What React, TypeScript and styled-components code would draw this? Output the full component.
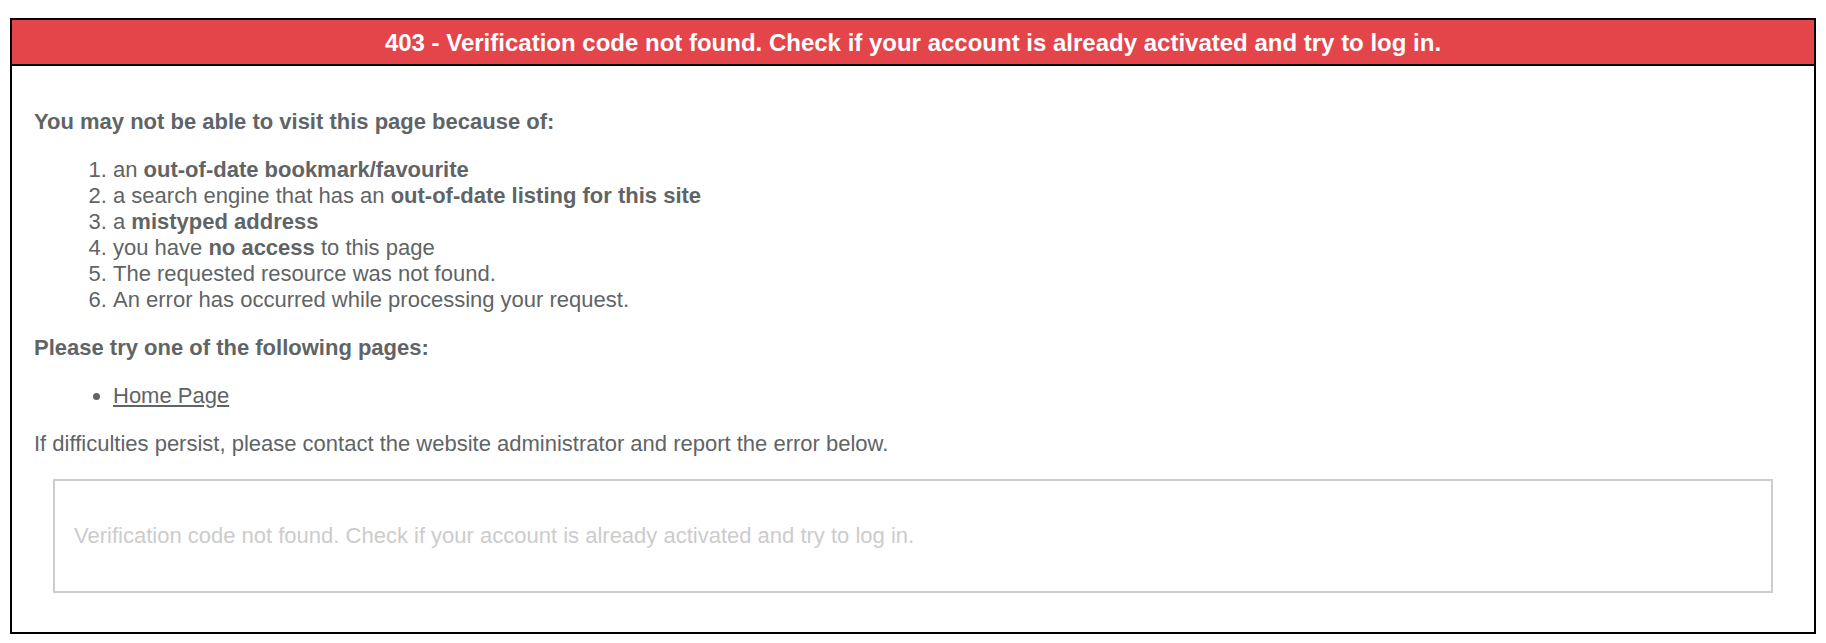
import styled, { createGlobalStyle } from "styled-components";

const GlobalStyle = createGlobalStyle`
  html, body {
    margin: 0;
    padding: 0;
    background: #fff;
  }
  body {
    font-family: "Liberation Sans", Arial, sans-serif;
  }
`

const Frame = styled.div`
  margin: 18px 10px 8px;
  border: 2px solid #000;
  background: #fff;
`

const Banner = styled.div`
  background-color: #e3454b;
  color: #fff;
  font-size: 24px;
  font-weight: bold;
  line-height: 28px;
  text-align: center;
  padding: 9px 12px 7px;
  border-bottom: 2px solid #000;
`

const Content = styled.div`
  display: flex;
  flex-direction: column;
  gap: 22px;
  padding: 43px 22px 39px;
  color: #5f6466;
  font-size: 22px;
  line-height: 26px;
`

const Heading = styled.div`
  font-weight: bold;
`

const Text = styled.div``

const List = styled.ol<{ $bullets?: boolean }>`
  margin: 0;
  padding-left: 79px;
  list-style-type: ${(p) => (p.$bullets ? "disc" : "decimal")};
`

const HomeLink = styled.a`
  color: inherit;
  text-decoration: underline;
`

const ErrorBox = styled.div`
  margin: 0 19px;
  border: 2px solid #cccccc;
  padding: 42px 19px;
  color: #cccccc;
  font-size: 22px;
  line-height: 26px;
`

export default function App() {
  return (
    <>
      <GlobalStyle />
      <Frame>
        <Banner>
          403 - Verification code not found. Check if your account is already activated and try to log in.
        </Banner>
        <Content>
          <Heading>You may not be able to visit this page because of:</Heading>
          <List>
            <li>an <b>out-of-date bookmark/favourite</b></li>
            <li>a search engine that has an <b>out-of-date listing for this site</b></li>
            <li>a <b>mistyped address</b></li>
            <li>you have <b>no access</b> to this page</li>
            <li>The requested resource was not found.</li>
            <li>An error has occurred while processing your request.</li>
          </List>
          <Heading>Please try one of the following pages:</Heading>
          <List as="ul" $bullets>
            <li><HomeLink href="#">Home Page</HomeLink></li>
          </List>
          <Text>If difficulties persist, please contact the website administrator and report the error below.</Text>
          <ErrorBox>
            Verification code not found. Check if your account is already activated and try to log in.
          </ErrorBox>
        </Content>
      </Frame>
    </>
  )
}
